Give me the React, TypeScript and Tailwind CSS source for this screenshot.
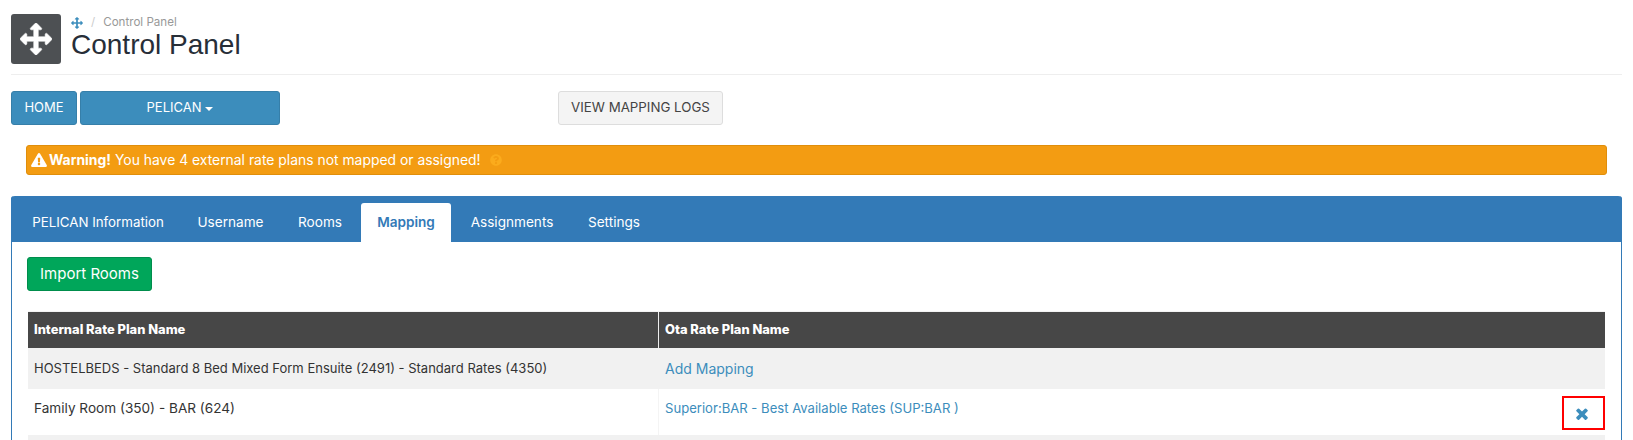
import React from "react";
import { FaExclamationTriangle, FaQuestionCircle } from "react-icons/fa";

const tabs = [
  { label: "PELICAN Information", cls: "w-[160px] text-[13.3px] text-white" },
  { label: "Username", cls: "w-[97px] text-white" },
  { label: "Rooms", cls: "w-[74px] text-white" },
  { label: "Mapping", cls: "w-[90px] rounded-t-[3px] bg-white font-semibold text-[#337ab7]" },
  { label: "Assignments", cls: "w-[114px] text-white" },
  { label: "Settings", cls: "w-[82px] text-white" },
];

function Arrows({ className, bold }: { className: string; bold?: boolean }) {
  return (
    <svg viewBox="0 0 1792 1792" fill="currentColor" stroke={bold ? "currentColor" : "none"} strokeWidth={bold ? 30 : 0} className={className}>
      <path d="M1792 896q0 26-19 45l-256 256q-19 19-45 19t-45-19-19-45v-128h-384v384h128q26 0 45 19t19 45-19 45l-256 256q-19 19-45 19t-45-19l-256-256q-19-19-19-45t19-45 45-19h128v-384h-384v128q0 26-19 45t-45 19-45-19l-256-256q-19-19-19-45t19-45l256-256q19-19 45-19t45 19 19 45v128h384v-384h-128q-26 0-45-19t-19-45 19-45l256-256q19-19 45-19t45 19l256 256q19 19 19 45t-19 45-45 19h-128v384h384v-128q0-26 19-45t45-19 45 19l256 256q19 19 19 45z" />
    </svg>
  );
}

function Times({ className }: { className: string }) {
  return (
    <svg viewBox="110 218 1188 1228" fill="currentColor" className={className}>
      <path d="M1298 1214q0 40-28 68l-136 136q-28 28-68 28t-68-28l-294-294-294 294q-28 28-68 28t-68-28l-136-136q-28-28-28-68t28-68l294-294-294-294q-28-28-28-68t28-68l136-136q28-28 68-28t68 28l294 294 294-294q28-28 68-28t68 28l136 136q28 28 28 68t-28 68l-294 294 294 294q28 28 28 68z" />
    </svg>
  );
}

export default function App() {
  return (
    <div className="h-[440px] w-[1633px] overflow-hidden bg-white font-['Inter','Open_Sans',sans-serif] text-[13px] text-[#333]">
      <div className="mx-[11px]">
        <div className="flex h-[75px] border-b border-[#eeeeee] pt-[14px]">
          <div className="flex h-[50px] w-[50px] items-center justify-center rounded-[3px] bg-[#4d5053] text-white">
            <Arrows bold className="h-[32px] w-[32px]" />
          </div>
          <div className="ml-[10px]">
            <div className="mt-px flex h-[16px] items-center text-[11.6px] text-[#999]">
              <Arrows className="h-[12px] w-[12px] text-[#3c8dbc]" />
              <span className="mx-[8px] text-[#ccc]">/</span>
              <span>Control Panel</span>
            </div>
            <h1 className="font-['Liberation_Sans',sans-serif] text-[28px] leading-[28px] font-normal text-[#272e38]">Control Panel</h1>
          </div>
        </div>

        <div className="mt-[16px] flex h-[34px] items-start">
          <div className="flex h-[34px] w-[66px] items-center justify-center rounded-[3px] border border-[#367fa9] bg-[#3c8dbc] text-white">HOME</div>
          <div className="ml-[3px] flex h-[34px] w-[200px] items-center justify-center rounded-[3px] border border-[#367fa9] bg-[#3c8dbc] text-white">
            PELICAN
            <span className="ml-[4px] mt-[1px] h-0 w-0 border-x-[4px] border-t-[4px] border-x-transparent border-t-white" />
          </div>
          <div className="ml-[278px] flex h-[34px] w-[165px] items-center justify-center rounded-[3px] border border-[#dddddd] bg-[#f4f4f4] text-[13.3px] text-[#444]">VIEW MAPPING LOGS</div>
        </div>

        <div className="mx-[15px] mt-[20px] flex h-[30px] items-center rounded-[3px] border border-[#e08e0b] bg-[#f39c12] pl-[4px] text-[13.9px] text-white">
          <FaExclamationTriangle className="h-[14px] w-[16px]" />
          <b className="ml-[2px] font-bold">Warning!</b>
          <span className="ml-[4px]">You have 4 external rate plans not mapped or assigned!</span>
          <FaQuestionCircle className="ml-[9px] h-[12px] w-[12px] text-[#fbab1c]" />
        </div>

        <div className="mt-[21px] rounded-t-[3px] border-x border-[#337ab7]">
          <div className="-mx-px flex h-[46px] items-end gap-[4px] rounded-t-[4px] bg-[#337ab7] pl-[7px] text-[13.6px]">
            {tabs.map((t) => (
              <div key={t.label} className={"flex h-[39px] items-center justify-center " + t.cls}>
                {t.label}
              </div>
            ))}
          </div>
          <div className="pl-[15px] pr-[16px] pt-[15px]">
            <div className="flex h-[34px] w-[125px] items-center justify-center rounded-[3px] border border-[#008d4c] bg-[#00a65a] text-[15px] text-white">Import Rooms</div>
            <div className="ml-px mt-[20px] border-t border-[#f4f4f4]">
              <div className="grid h-[36px] grid-cols-[630px_1fr] items-center bg-[#474747] text-[12.9px] font-extrabold text-white">
                <div className="pl-[6px]">Internal Rate Plan Name</div>
                <div className="flex h-full items-center border-l border-[#eeeeee] pl-[6px]">Ota Rate Plan Name</div>
              </div>
              <div className="grid h-[41px] grid-cols-[630px_1fr] items-center bg-[#f1f1f1]">
                <div className="pl-[6px]">HOSTELBEDS - Standard 8 Bed Mixed Form Ensuite (2491) - Standard Rates (4350)</div>
                <div className="pl-[7px] text-[14px] text-[#3c8dbc]">Add Mapping</div>
              </div>
              <div className="grid h-[46px] grid-cols-[630px_1fr] bg-white">
                <div className="pl-[6px] pt-[9px] text-[13.6px]">Family Room (350) - BAR (624)</div>
                <div className="flex justify-between border-l border-[#f4f4f4] pl-[6px] pt-[10px] text-[13.1px] text-[#3c8dbc]">
                  <span>Superior:BAR - Best Available Rates (SUP:BAR )</span>
                  <span className="mt-[-3px] flex h-[34px] w-[43px] shrink-0 items-center justify-center border-[2px] border-[#ff0000] pr-[3px] pt-px">
                    <Times className="h-[12px] w-[12px] text-[#3c8dbc]" />
                  </span>
                </div>
              </div>
              <div className="h-[30px] bg-[#f1f1f1]" />
            </div>
          </div>
        </div>
      </div>
    </div>
  );
}
